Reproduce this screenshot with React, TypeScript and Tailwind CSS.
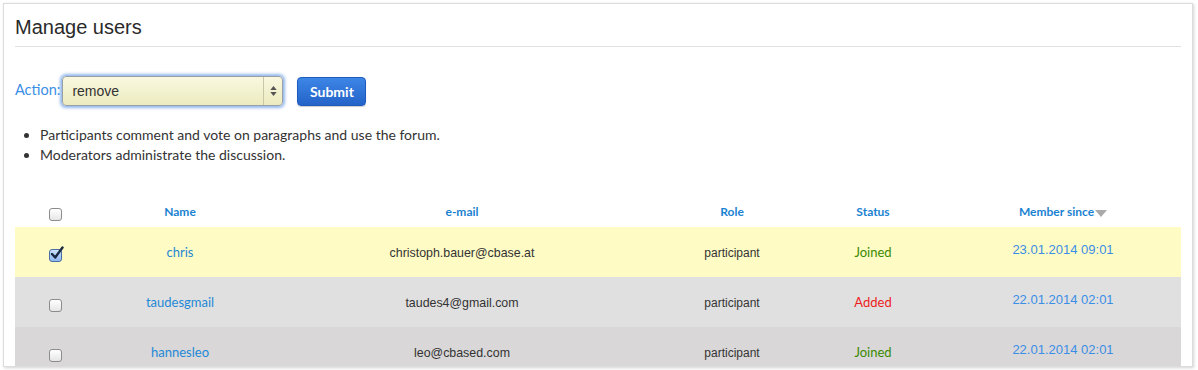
import React from "react";

type User = {
  name: string;
  email: string;
  role: string;
  status: "Joined" | "Added";
  since: string;
  checked: boolean;
  rowBg: string;
};

const users: User[] = [
  { name: "chris", email: "christoph.bauer@cbase.at", role: "participant", status: "Joined", since: "23.01.2014 09:01", checked: true, rowBg: "bg-[#fffbc4]" },
  { name: "taudesgmail", email: "taudes4@gmail.com", role: "participant", status: "Added", since: "22.01.2014 02:01", checked: false, rowBg: "bg-[#e0e0e0]" },
  { name: "hannesleo", email: "leo@cbased.com", role: "participant", status: "Joined", since: "22.01.2014 02:01", checked: false, rowBg: "bg-[#d9d7d8]" },
];

const grid = "grid grid-cols-[80px_170px_394px_146px_136px_244px]";

function Checkbox({ checked }: { checked: boolean }) {
  if (checked) {
    return (
      <span className="relative inline-block w-[13px] h-[13px] rounded-[3px] border border-[#4a6fa5] bg-gradient-to-b from-[#cfe3fb] to-[#8fb8ef]">
        <svg viewBox="0 0 14 14" className="absolute -top-[4px] left-[0px] w-[14px] h-[14px]">
          <path d="M2 8 L5.2 11.5 L12.5 1.5" fill="none" stroke="#1b2a44" strokeWidth="2.4" strokeLinecap="round" strokeLinejoin="round" />
        </svg>
      </span>
    );
  }
  return <span className="inline-block w-[13px] h-[13px] rounded-[3px] border border-[#8c8c8c] bg-gradient-to-b from-white to-[#e6e6e6]" />;
}

export default function App() {
  return (
    <div className="w-[1198px] h-[370px] bg-white pt-[3px] pl-[3px] overflow-hidden">
      <div className="w-[1190px] h-[364px] bg-white border border-[#dcdcdc] shadow-[1px_1px_3px_rgba(0,0,0,0.18)] px-[11px] overflow-hidden">
        <h1 className="font-['Liberation_Sans',Arial,sans-serif] text-[20px] text-[#2a2a2a] leading-none pt-[13px] pb-[9px] border-b border-[#e2e2e2]">
          Manage users
        </h1>

        <div className="flex items-center mt-[29px] font-['Lato',sans-serif]">
          <span className="text-[14.5px] text-[#3a8ee6] mr-[2px] -mt-[3px]">Action:</span>
          <div className="flex items-center w-[221px] h-[30px] rounded-[4px] shadow-[0_0_3px_2px_rgba(110,160,230,0.75)] border border-[#9aa0a8] bg-gradient-to-b from-[#f9f8e0] to-[#ecebbf]">
            <span className="flex-1 pl-[9px] text-[14px] text-[#333] font-['Liberation_Sans',Arial,sans-serif]">remove</span>
            <span className="w-[19px] h-full border-l border-[#c8c8a8] flex flex-col items-center justify-center gap-[2px]">
              <svg viewBox="0 0 8 5" className="w-[7px] h-[4px]"><path d="M0 5 L4 0 L8 5 Z" fill="#555" /></svg>
              <svg viewBox="0 0 8 5" className="w-[7px] h-[4px]"><path d="M0 0 L4 5 L8 0 Z" fill="#555" /></svg>
            </span>
          </div>
          <button className="ml-[14px] w-[69px] h-[29px] rounded-[4px] border border-[#1e5bbf] bg-gradient-to-b from-[#3d86e6] to-[#2463c9] text-white text-[14px] font-bold shadow-[0_1px_1px_rgba(0,0,0,0.2)]">
            Submit
          </button>
        </div>

        <ul className="mt-[19px] font-['Lato',sans-serif] text-[14px] text-[#333] leading-[20px] list-disc pl-[25px]">
          <li>Participants comment and vote on paragraphs and use the forum.</li>
          <li>Moderators administrate the discussion.</li>
        </ul>

        <div className="mt-[31px]">
          <div className={`${grid} h-[31px] items-center font-['Lato',sans-serif] font-bold text-[12px] text-[#1b82d1]`}>
            <div className="flex justify-center pt-[5px]"><Checkbox checked={false} /></div>
            <div className="text-center">Name</div>
            <div className="text-center">e-mail</div>
            <div className="text-center">Role</div>
            <div className="text-center">Status</div>
            <div className="flex justify-center items-center">
              Member since
              <svg viewBox="0 0 12 7" className="w-[12px] h-[7px] ml-[1px] mt-[4px]"><path d="M0 0 L12 0 L6 7 Z" fill="#aaa" /></svg>
            </div>
          </div>
          {users.map((u) => (
            <div key={u.name} className={`${grid} h-[50px] items-center ${u.rowBg} text-[12px] pt-[2px]`}>
              <div className="flex justify-center pt-[5px]"><Checkbox checked={u.checked} /></div>
              <div className="text-center font-['Lato',sans-serif] text-[13px] text-[#1e88d6]">{u.name}</div>
              <div className="text-center font-['Liberation_Sans',Arial,sans-serif] text-[12.4px] text-[#333]">{u.email}</div>
              <div className="text-center font-['Liberation_Sans',Arial,sans-serif] text-[#333]">{u.role}</div>
              <div className={`text-center font-['Lato',sans-serif] text-[13px] ${u.status === "Joined" ? "text-[#3a8a00]" : "text-[#ee1c1c]"}`}>{u.status}</div>
              <div className="text-center font-['Liberation_Sans',Arial,sans-serif] text-[13px] text-[#3a8ee6] -mt-[7px]">{u.since}</div>
            </div>
          ))}
        </div>
      </div>
    </div>
  );
}
